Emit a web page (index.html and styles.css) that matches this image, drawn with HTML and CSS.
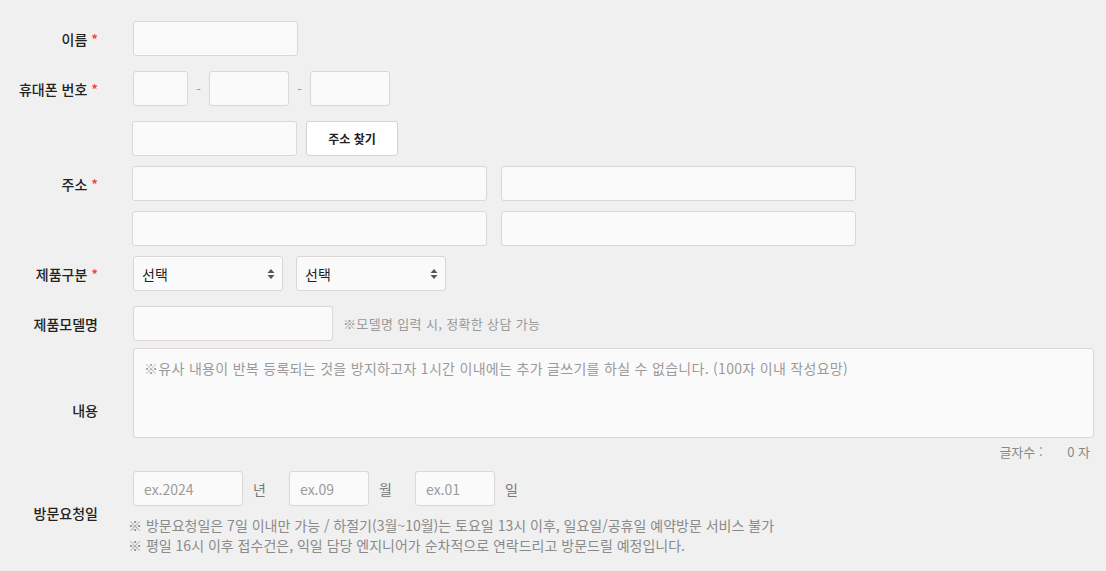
FILE: index.html
```html
<!DOCTYPE html>
<html lang="ko">

<head>
  <title>방문 신청</title>
  <meta charset="UTF-8">
  <link rel="stylesheet" href="styles.css">
</head>

<body>
  <form class="form">
    <div class="row row-name">
      <label class="label">이름 <em>*</em></label>
      <div class="fields">
        <input class="input w165" type="text">
      </div>
    </div>

    <div class="row row-phone">
      <label class="label">휴대폰 번호 <em>*</em></label>
      <div class="fields line">
        <input class="input w55" type="text">
        <span class="dash">-</span>
        <input class="input w80" type="text">
        <span class="dash">-</span>
        <input class="input w80" type="text">
      </div>
    </div>

    <div class="row row-addr">
      <label class="label">주소 <em>*</em></label>
      <div class="fields stack">
        <div class="line">
          <input class="input w165" type="text">
          <button class="btn" type="button">주소 찾기</button>
        </div>
        <div class="line gap14">
          <input class="input w355" type="text">
          <input class="input w355" type="text">
        </div>
        <div class="line gap14">
          <input class="input w355" type="text">
          <input class="input w355" type="text">
        </div>
      </div>
    </div>

    <div class="row row-product">
      <label class="label">제품구분 <em>*</em></label>
      <div class="fields line gap13">
        <div class="select">
          <select><option>선택</option></select>
          <svg class="arrows" width="8" height="12" viewBox="0 0 8 12"><path d="M4 1 L7.5 5 H0.5 Z M4 11 L7.5 7 H0.5 Z" fill="#555"/></svg>
        </div>
        <div class="select">
          <select><option>선택</option></select>
          <svg class="arrows" width="8" height="12" viewBox="0 0 8 12"><path d="M4 1 L7.5 5 H0.5 Z M4 11 L7.5 7 H0.5 Z" fill="#555"/></svg>
        </div>
      </div>
    </div>

    <div class="row row-model">
      <label class="label">제품모델명</label>
      <div class="fields line">
        <input class="input w200" type="text">
        <span class="hint">※모델명 입력 시, 정확한 상담 가능</span>
      </div>
    </div>

    <div class="row row-content">
      <label class="label">내용</label>
      <div class="fields grow">
        <textarea class="textarea" placeholder="※유사 내용이 반복 등록되는 것을 방지하고자 1시간 이내에는 추가 글쓰기를 하실 수 없습니다. (100자 이내 작성요망)"></textarea>
        <div class="counter">글자수 : <span class="count">0</span> 자</div>
      </div>
    </div>

    <div class="row row-date">
      <label class="label">방문요청일</label>
      <div class="fields">
        <div class="line">
          <input class="input w110" type="text" placeholder="ex.2024">
          <span class="unit">년</span>
          <input class="input w80" type="text" placeholder="ex.09">
          <span class="unit">월</span>
          <input class="input w80" type="text" placeholder="ex.01">
          <span class="unit">일</span>
        </div>
        <ul class="notes">
          <li>※ 방문요청일은 7일 이내만 가능 / 하절기(3월~10월)는 토요일 13시 이후, 일요일/공휴일 예약방문 서비스 불가</li>
          <li>※ 평일 16시 이후 접수건은, 익일 담당 엔지니어가 순차적으로 연락드리고 방문드릴 예정입니다.</li>
        </ul>
      </div>
    </div>
  </form>
</body>

</html>
```

FILE: styles.css
```css
* {
  padding: 0;
  margin: 0;
  box-sizing: border-box;
}

body {
  background-color: #f0f0f0;
  font-family: "Noto Sans CJK KR", "Noto Sans", sans-serif;
  font-size: 14px;
  color: #222;
}

.form {
  padding: 21px 12px 0 0;
}

.row {
  display: flex;
  align-items: center;
}

.label {
  width: 98px;
  flex-shrink: 0;
  text-align: right;
  font-weight: 500;
  font-size: 14px;
  color: #222;
  white-space: nowrap;
}

.label em {
  font-style: normal;
  color: #f03e3e;
}

.fields {
  margin-left: 35px;
}

.grow {
  flex: 1;
}

.line {
  display: flex;
  align-items: center;
}

.stack {
  display: flex;
  flex-direction: column;
  gap: 10px;
  margin-left: 34px;
}

.gap14 {
  gap: 14px;
}

.gap13 {
  gap: 13px;
}

.row-phone,
.row-addr,
.row-model {
  margin-top: 15px;
}

.row-product {
  margin-top: 10px;
}

.row-content {
  margin-top: 7px;
}

.row-date {
  padding-bottom: 30px;
}

.input,
.select select,
.textarea {
  height: 35px;
  border: 1px solid #dcd6d6;
  border-radius: 3px;
  background-color: #fafafa;
  font-family: inherit;
  font-size: 14px;
  color: #222;
  outline: none;
}

.input {
  padding: 0 10px;
}

.input::placeholder,
.textarea::placeholder {
  color: #9a9a9a;
}

.w55 { width: 55px; }
.w80 { width: 80px; }
.w110 { width: 110px; }
.w165 { width: 165px; }
.w200 { width: 200px; }
.w355 { width: 355px; }

.dash {
  width: 21px;
  text-align: center;
  color: #999;
  font-size: 13px;
}

.btn {
  margin-left: 9px;
  width: 92px;
  height: 35px;
  background-color: #fff;
  border: 1px solid #d6d2d2;
  border-radius: 3px;
  font-family: inherit;
  font-size: 12px;
  font-weight: 700;
  color: #222;
}

.select {
  position: relative;
}

.select select {
  appearance: none;
  width: 150px;
  padding: 0 8px;
}

.select .arrows {
  position: absolute;
  right: 8px;
  top: 12px;
  pointer-events: none;
}

.hint {
  margin-left: 10px;
  font-size: 13px;
  letter-spacing: 0.35px;
  color: #999;
}

.textarea {
  display: block;
  width: 100%;
  height: 90px;
  padding: 8px 10px;
  resize: none;
  line-height: 22px;
  letter-spacing: 0.3px;
}

.counter {
  height: 33px;
  line-height: 28px;
  text-align: right;
  padding-right: 4px;
  font-size: 13px;
  color: #888;
}

.count {
  display: inline-block;
  margin-left: 21px;
}

.unit {
  width: 46px;
  padding-left: 10px;
  color: #777;
}

.notes {
  list-style: none;
  margin: 9px 0 0 -5px;
  font-size: 14px;
  line-height: 20px;
  color: #8a8a8a;
}
```
